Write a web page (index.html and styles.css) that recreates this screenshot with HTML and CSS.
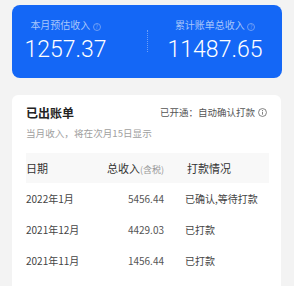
FILE: index.html
```html
<!DOCTYPE html>
<html lang="zh-CN">
<head>
    <meta charset="UTF-8">
    <meta name="viewport" content="width=device-width, initial-scale=1.0">
    <title>收入账单</title>
    <link rel="stylesheet" href="styles.css">
</head>
<body>

    <div class="summary">
        <div class="stat stat-left">
            <p class="stat-label">本月预估收入 <span class="help">?</span></p>
            <p class="stat-value">1257.37</p>
        </div>
        <div class="divider"></div>
        <div class="stat">
            <p class="stat-label">累计账单总收入 <span class="help">?</span></p>
            <p class="stat-value">11487.65</p>
        </div>
    </div>

    <div class="bills">
        <div class="bills-head">
            <h3>已出账单</h3>
            <span class="auto-pay">已开通：自动确认打款
                <svg width="9" height="9" viewBox="0 0 10 10">
                    <circle cx="5" cy="5" r="4.4" fill="none" stroke="#666" stroke-width="0.9"/>
                    <line x1="5" y1="4.3" x2="5" y2="7.4" stroke="#666" stroke-width="0.9"/>
                    <circle cx="5" cy="2.9" r="0.6" fill="#666"/>
                </svg>
            </span>
        </div>
        <p class="bills-note">当月收入，将在次月15日显示</p>

        <div class="table">
            <div class="row row-head">
                <span>日期</span>
                <span class="amount">总收入<small>(含税)</small></span>
                <span class="status">打款情况</span>
            </div>
            <div class="row">
                <span>2022年1月</span>
                <span class="amount">5456.44</span>
                <span class="status">已确认,等待打款</span>
            </div>
            <div class="row">
                <span>2021年12月</span>
                <span class="amount">4429.03</span>
                <span class="status">已打款</span>
            </div>
            <div class="row">
                <span>2021年11月</span>
                <span class="amount">1456.44</span>
                <span class="status">已打款</span>
            </div>
            <div class="row">
                <span>2021年10月</span>
                <span class="amount">1732.18</span>
                <span class="status">已打款</span>
            </div>
        </div>
    </div>

</body>
</html>
```

FILE: styles.css
```css
* {
    margin: 0;
    padding: 0;
    box-sizing: border-box;
    font-family: "Noto Sans CJK SC", "Noto Sans", sans-serif;
}
body {
    background-color: #f3f3f3;
    padding: 5px 12px 0;
    overflow: hidden;
}
.summary {
    display: grid;
    grid-template-columns: 135px 1px 1fr;
    align-items: start;
    height: 73px;
    background: #1467f6;
    border-radius: 8px;
    padding-top: 14px;
    color: white;
}
.stat {
    text-align: center;
}
.stat-left {
    padding-right: 28px;
}
.stat-label {
    font-size: 10px;
    line-height: 12px;
    color: #a8c6fb;
    white-space: nowrap;
}
.help {
    display: inline-block;
    width: 8px;
    height: 8px;
    border: 1px solid #6f9ff5;
    border-radius: 50%;
    font-size: 6px;
    line-height: 6px;
    color: #6f9ff5;
    text-align: center;
    vertical-align: 0;
}
.stat-value {
    margin-top: 6px;
    font-family: Roboto, "Liberation Sans", sans-serif;
    font-weight: 300;
    font-size: 23px;
    line-height: 26px;
}
.divider {
    margin-top: 11px;
    height: 22px;
    border-left: 1px dotted #6d9ff7;
}
.bills {
    margin-top: 17px;
    background: white;
    border-radius: 6px;
    padding: 9px 12px 0 14px;
    width: 269px;
    height: 200px;
}
.bills-head {
    display: flex;
    justify-content: space-between;
    align-items: center;
    height: 16px;
}
.bills-head h3 {
    font-size: 12px;
    font-weight: bold;
    color: #222;
}
.auto-pay {
    display: flex;
    align-items: center;
    gap: 3px;
    font-size: 9.5px;
    color: #555;
    margin-right: 2px;
}
.bills-note {
    margin-top: 6px;
    font-size: 9.6px;
    line-height: 14px;
    color: #a0a0a0;
}
.table {
    margin-top: 13px;
}
.row {
    display: grid;
    grid-template-columns: 78px 60px 1fr;
    align-items: center;
    height: 31px;
    font-size: 10px;
    color: #444;
}
.row-head {
    height: 30px;
    background: #f8f8f8;
    font-size: 11px;
    color: #333;
}
.row-head small {
    font-size: 9px;
    color: #999;
}
.amount {
    text-align: right;
    color: #555;
}
.row-head .amount {
    color: #333;
    white-space: nowrap;
}
.status {
    padding-left: 21px;
    white-space: nowrap;
}
.row-head .status {
    padding-left: 23px;
}
```
